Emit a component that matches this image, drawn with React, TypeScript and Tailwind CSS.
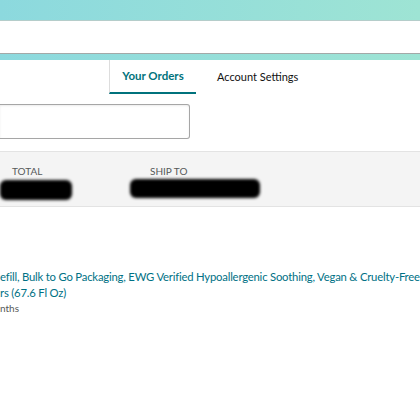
import React from "react";

const Scribble: React.FC<{ className: string }> = ({ className }) => (
  <div className={`bg-black rounded-[6px] blur-[1.5px] ${className}`} />
);

const App: React.FC = () => {
  return (
    <div className="w-[420px] h-[420px] overflow-hidden bg-white font-['Lato',sans-serif] text-[#0f1111]">
      {/* top bars */}
      <div className="h-[20px] bg-gradient-to-r from-[#8cd9de] to-[#9ee4d4]" />
      <div className="h-px bg-[#b5cdca]" />
      <div className="h-[32px] bg-white" />
      <div className="h-px bg-[#a3a9a8]" />
      <div className="h-[6px] bg-gradient-to-r from-[#8cd9de] to-[#9ee4d4]" />

      {/* tabs */}
      <div className="flex h-[34px]">
        <div className="w-[109px]" />
        <div className="w-[87px] border-l border-[#dddddd] border-b-2 border-b-[#00727c] flex items-center justify-center text-[11.5px] font-bold text-[#00727c]">
          Your Orders
        </div>
        <div className="ml-[21px] flex items-center text-[11px] text-[#111111]">
          Account Settings
        </div>
      </div>

      {/* search */}
      <div className="mt-[10px] w-[190px] h-[35px] border border-l-0 border-[#a6a6a6] rounded-r-[3px] shadow-[inset_0_1px_2px_rgba(0,0,0,0.08)]" />

      {/* order header */}
      <div className="mt-[12px] h-[56px] bg-[#f4f4f4] border-y border-[#e3e3e3] flex text-[10px] text-[#565959]">
        <div className="w-[130px] flex flex-col">
          <div className="pl-[12px] pt-[12px] leading-[14px]">TOTAL</div>
          <Scribble className="mt-[2px] w-[72px] h-[20px]" />
        </div>
        <div className="flex flex-col">
          <div className="pl-[20px] pt-[12px] leading-[14px]">SHIP TO</div>
          <Scribble className="mt-[1px] w-[130px] h-[19px]" />
        </div>
      </div>

      {/* item */}
      <div className="mt-[62px] text-[11.3px] tracking-[-0.2px] leading-[16px] text-[#007185] whitespace-nowrap overflow-hidden">
        <div>efill, Bulk to Go Packaging, EWG Verified Hypoallergenic Soothing, Vegan &amp; Cruelty-Free</div>
        <div>rs (67.6 Fl Oz)</div>
      </div>
      <div className="text-[10px] leading-[14px] text-[#565959]">nths</div>
    </div>
  );
};

export default App;
